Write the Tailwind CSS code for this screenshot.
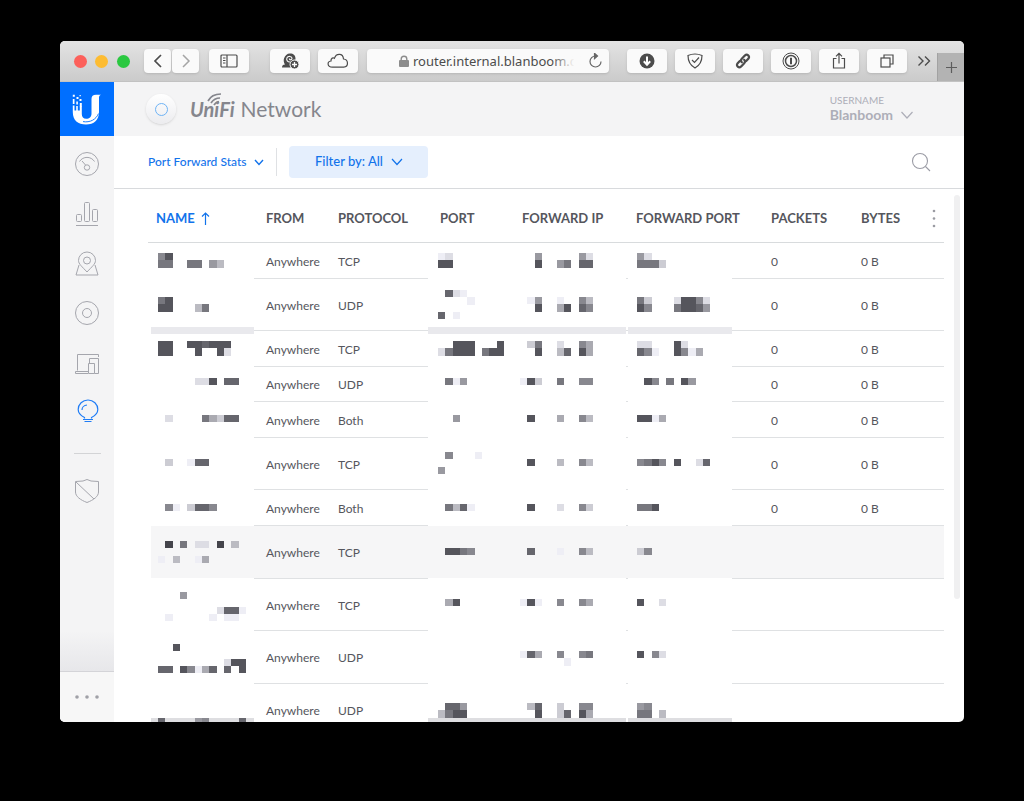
<!DOCTYPE html>
<html lang="en">
<head>
<meta charset="utf-8">
<title>UniFi Network</title>
<script src="https://cdn.jsdelivr.net/npm/@tailwindcss/browser@4"></script>
</head>
<body class="flex h-screen flex-col bg-black px-[60px] pt-[41px] pb-[79px] font-[Lato,sans-serif]">
<div class="flex min-h-0 flex-1 flex-col overflow-hidden rounded-[5px] bg-white">

  <!-- Browser toolbar -->
  <div class="flex h-[41px] shrink-0 items-center border-b border-[#c2c2c2] bg-linear-to-b from-[#e3e3e3] to-[#cbcbcb] text-[#4c4c4c]">
    <div class="ml-3.5 flex gap-2">
      <span class="size-[13px] rounded-full bg-[#fc605b]"></span>
      <span class="size-[13px] rounded-full bg-[#fdbc32]"></span>
      <span class="ml-px size-[13px] rounded-full bg-[#2ac840]"></span>
    </div>
    <div class="ml-3.5 flex gap-px">
      <button aria-label="Back" class="flex h-6 w-[27px] items-center justify-center rounded-sm bg-[#fafafa] shadow-sm"><svg width="10" height="14" fill="none" stroke="currentColor" stroke-width="1.7"><path d="M8 1 2 7l6 6"/></svg></button>
      <button aria-label="Forward" class="flex h-6 w-[27px] items-center justify-center rounded-sm bg-[#fafafa] text-[#a5a5a5] shadow-sm"><svg width="10" height="14" fill="none" stroke="currentColor" stroke-width="1.5"><path d="m2 1 6 6-6 6"/></svg></button>
    </div>
    <button aria-label="Sidebar" class="ml-2.5 flex h-6 w-10 items-center justify-center rounded-sm bg-[#fafafa] shadow-sm"><svg width="18" height="14" fill="none" stroke="currentColor" stroke-width="1.2"><rect x="1" y="1" width="16" height="12" rx="1"/><path d="M7 1v12M3 4h2.500M3 6.500h2.500M3 9h2.500"/></svg></button>
    <button aria-label="Add feed" class="ml-[21px] flex h-6 w-10 items-center justify-center rounded-sm bg-[#fafafa] shadow-sm"><svg width="20" height="18" viewBox="0 0 20 18"><path d="M2 15.500c0-2 1-3 3-3C3.500 10.500 3.500 8 4 6.500 5 3.500 7 1.500 10 1.500c3.500 0 5.500 2 5.500 5 0 2-1 4-3 5l-2 4z" fill="#4c4c4c"/><path d="M10.500 10C7.500 10.500 6 8 7 5.800c1-2 5-1.800 5 .5 0 2-2.800 2-2.600.2" fill="none" stroke="#fafafa" stroke-width="1.100"/><circle cx="14.500" cy="12.500" r="4.500" fill="#4c4c4c" stroke="#fafafa"/><path d="M12 12.500h5M14.500 10v5" stroke="#fafafa" stroke-width="1.300"/></svg></button>
    <button aria-label="Cloud tabs" class="ml-2 flex h-6 w-10 items-center justify-center rounded-sm bg-[#fafafa] shadow-sm"><svg width="22" height="16" viewBox="0 0 22 16" fill="none" stroke="currentColor" stroke-width="1.200"><path d="M5.500 14.200C-.2 14 0 8.500 4 8 3.600 5 6.500 4.300 7.500 5.200 9 .2 16-.2 16.500 6c5 .3 5.500 7.800.2 8.200z"/></svg></button>
    <div class="ml-[9px] mr-[18px] flex h-6 min-w-0 flex-1 items-center rounded-sm bg-[#fafafa] pr-1.5 pl-8 shadow-sm">
      <svg class="shrink-0" width="10" height="13" viewBox="0 0 10 13"><rect y="5" width="10" height="7" rx="1" fill="#8c8c8c"/><path d="M2.200 6V4a2.800 2.800 0 0 1 5.600 0v2" fill="none" stroke="#8c8c8c" stroke-width="1.400"/></svg>
      <div class="relative ml-1 min-w-0 flex-1">
        <input aria-label="Address" value="router.internal.blanboom.com" class="block w-full bg-transparent font-['Noto_Sans',sans-serif] text-[13px] leading-5 text-[#4c4c4c]">
        <div class="absolute inset-y-0 right-0 w-8 bg-linear-to-r from-[#fafafa]/0 to-[#fafafa] to-70%"></div>
      </div>
      <button aria-label="Reload" class="ml-1"><svg width="15" height="16" viewBox="0 0 15 16" fill="none" stroke="#666" stroke-width="1.200"><path d="M13 8.500A5.500 5.500 0 1 1 7.500 3H9"/><path d="m6.500.3 3 2.700-3 2.700z" fill="#666"/></svg></button>
    </div>
    <div class="flex gap-2">
      <button aria-label="Downloads" class="flex h-6 w-10 items-center justify-center rounded-sm bg-[#fafafa] shadow-sm"><svg width="16" height="16"><circle cx="8" cy="8" r="7.500" fill="#4c4c4c"/><path d="M8 3.500v8M4.800 8.300 8 11.700l3.200-3.400" fill="none" stroke="#fff" stroke-width="2"/></svg></button>
      <button aria-label="Ad blocker" class="flex h-6 w-10 items-center justify-center rounded-sm bg-[#fafafa] shadow-sm"><svg width="16" height="16" fill="none" stroke="currentColor" stroke-width="1.200"><path d="M8 1c2.500 0 5 .6 7 1.500 0 6-2.500 10-7 12.500-4.500-2.500-7-6.500-7-12.500C3 1.600 5.500 1 8 1z"/><path d="m5 7 2.500 2.500L12 4.500"/></svg></button>
      <button aria-label="Copy link" class="flex h-6 w-10 items-center justify-center rounded-sm bg-[#fafafa] shadow-sm"><svg width="16" height="16" viewBox="0 0 16 16" fill="none" stroke="currentColor" stroke-width="2.200" stroke-linecap="round"><path d="M6.800 9.200c-1-1-1-2.300 0-3.400l3-3.200c2.400-2.200 5.500.6 3.500 3.200l-2.100 2.300"/><path d="M9.200 6.800c1 1 1 2.300 0 3.400l-3 3.200c-2.400 2.200-5.500-.6-3.500-3.200l2.100-2.300"/></svg></button>
      <button aria-label="1Password" class="flex h-6 w-10 items-center justify-center rounded-sm bg-[#fafafa] shadow-sm"><svg width="18" height="18" fill="none" stroke="currentColor"><circle cx="9" cy="9" r="8"/><circle cx="9" cy="9" r="5.500" stroke-width="1.500"/><path d="M9 5.800v6.400" stroke-width="2"/></svg></button>
      <button aria-label="Share" class="flex h-6 w-10 items-center justify-center rounded-sm bg-[#fafafa] shadow-sm"><svg width="14" height="18" fill="none" stroke="currentColor" stroke-width="1.200"><path d="M4.500 6.500h-3v9.500h11V6.500h-3M7 11.500v-10M4 4.300l3-3 3 3"/></svg></button>
      <button aria-label="Tabs" class="flex h-6 w-10 items-center justify-center rounded-sm bg-[#fafafa] shadow-sm"><svg width="14" height="14" fill="none" stroke="currentColor" stroke-width="1.200"><rect x="1" y="4" width="9" height="9"/><path d="M4 4V1h9v9h-3"/></svg></button>
    </div>
    <button aria-label="More" class="ml-2.5"><svg width="14" height="12" fill="none" stroke="currentColor" stroke-width="1.400"><path d="m1.500 1.500 4.500 4.500-4.500 4.500M8 1.500l4.500 4.500L8 10.500"/></svg></button>
    <button aria-label="New tab" class="ml-1.5 flex h-7 w-[27px] items-center justify-center self-end border-l border-[#a2a2a2] bg-[#b3b3b3]"><svg width="13" height="13" stroke="#5c5c5c" stroke-width="1.200"><path d="M6.500 1v11M1 6.500h11"/></svg></button>
  </div>

  <div class="flex min-h-0 flex-1">
    <!-- Navigation -->
    <nav class="flex w-[54px] shrink-0 flex-col bg-[#f4f4f5] text-[#a5a6ad]">
      <a href="#" aria-label="Home" class="flex h-[54px] items-center justify-center bg-[#006fff]">
        <svg width="30" height="31" viewBox="0 0 30 31" fill="#fff"><path d="M19.500 5c0-3 1.500-4.200 4.500-4.200h5c-1.600.7-2 1.700-2 3.200v14c0 8-5 12.500-13 12.500S.8 26.500.8 18v-6.500h1.700v5h1.700V12h1.600v4.500h2V12h2v8c0 3 1.500 4.800 4.500 4.800s5.200-1.800 5.200-5.300z"/><path d="M.8.800h2v2h-2zM4.500 3h2v2h-2zM7.500 1h1.300v1.300H7.500zM7.500 5h2v2h-2zM.8 5h1.700v5H.8zM4.300 7.500h1.600v3H4.300zM7.800 9h2v3.500h-2z"/><path d="M11 27.600c7 1.200 13-2 15.500-8" fill="none" stroke="#006fff" stroke-width=".9"/></svg>
      </a>
      <div class="flex flex-1 flex-col items-center pt-[15px]">
        <a href="#" aria-label="Dashboard" class="block h-[50px]"><svg width="26" height="26" fill="none" stroke="currentColor"><circle cx="13" cy="13" r="11.500"/><path d="M5.500 10.500c3.500-5.500 11.500-5.500 15 0"/><circle cx="13" cy="16.500" r="2.700"/><path d="m11.500 14-3.500-4"/></svg></a>
        <a href="#" aria-label="Statistics" class="block h-[50px]"><svg width="26" height="26" fill="none" stroke="currentColor"><rect x="2.500" y="13.500" width="5" height="7" rx="1"/><rect x="10.500" y="1.500" width="5" height="19" rx="1"/><rect x="18.500" y="8.500" width="5" height="12" rx="1"/><path d="M2 24.500h22"/></svg></a>
        <a href="#" aria-label="Map" class="block h-[49px]"><svg width="26" height="26" fill="none" stroke="currentColor"><path d="M13 21C8 15.500 4.500 13 4.500 9.500a8.500 8.500 0 0 1 17 0C21.500 13 18 15.500 13 21z"/><circle cx="13" cy="9.500" r="3.500"/><path d="m5 14-3 10h22l-3-10"/></svg></a>
        <a href="#" aria-label="Devices" class="block h-[51px]"><svg width="26" height="26" fill="none" stroke="currentColor"><circle cx="13" cy="13" r="11.500"/><circle cx="13" cy="13" r="4.500"/></svg></a>
        <a href="#" aria-label="Clients" class="block h-[47px]"><svg width="26" height="26" fill="none" stroke="currentColor"><path d="M24.500 6V3.500h-21v16M14 20.500H1.500v2H14M14.500 22.500v-10h6v10zM15.500 12.500v-5h9v15h-4"/></svg></a>
        <a href="#" aria-label="Insights" class="block text-[#1f7cf5]"><svg width="26" height="26" fill="none" stroke="currentColor" stroke-width="1.200"><path d="M10.500 20.500v-1C6.500 17.500 4.200 15 4.200 11.500a9.800 9.500 0 0 1 19.600 0c0 3.500-2.300 6-6.300 8v1M9 21.500h10M10.500 23.500h7M8 12c0-2.500 2-4.800 5-5"/></svg></a>
        <div class="mt-[29px] h-px w-[27px] bg-[#d3d4d6]"></div>
        <a href="#" aria-label="Security" class="mt-6 block"><svg width="26" height="26" fill="none" stroke="currentColor"><path d="M13 1.500 17 3l7.500.5V14c0 4.500-5 8-11.500 10.500C6.500 22 1.500 18.500 1.500 14V3.500L9 3zM2 4l18 17"/></svg></a>
      </div>
      <div class="h-10 bg-linear-to-b from-[#f4f4f5] to-[#e7e7ea]"></div>
      <button aria-label="More options" class="flex h-[51px] items-center justify-center border-t border-[#d4d4d8] bg-[#f7f7f7]"><svg width="26" height="4" fill="#a0a1a7"><circle cx="3" cy="2" r="1.800"/><circle cx="13" cy="2" r="1.800"/><circle cx="23" cy="2" r="1.800"/></svg></button>
    </nav>

    <main class="flex min-w-0 flex-1 flex-col">
      <header class="flex h-[54px] shrink-0 items-center bg-[#f4f4f5] pr-[51px] pl-8">
        <span class="flex size-[30px] items-center justify-center rounded-full bg-linear-to-b from-white to-[#ececef] shadow-sm"><span class="size-[13px] rounded-full border-[1px] border-[#6fb3f5]"></span></span>
        <h1 class="ml-[14px] flex items-center gap-1.5 text-[21px] leading-[54px] text-[#85868d]">
          <span class="relative text-[20px] font-bold italic">UniFi
            <svg class="absolute top-2.5 left-4" width="18" height="15" viewBox="0 0 18 15" fill="none" stroke="#85868d" stroke-width="1.700"><path d="M2 9C4 5 9 2 15 2M5 11c2-3 5-5 9-5M8 13c1-2 3-3 5-3.500"/></svg>
          </span>
          <span>Network</span>
        </h1>
        <button class="ml-auto text-left text-[#adaeb8]">
          <span class="block text-[10px] leading-3">USERNAME</span>
          <span class="flex items-center gap-2 text-[14px] leading-[18px] font-bold">Blanboom <svg width="12" height="8" fill="none" stroke="currentColor" stroke-width="1.200"><path d="m.5 1 5.500 6 5.500-6"/></svg></span>
        </button>
      </header>

      <div class="flex h-[53px] shrink-0 items-center border-b border-[#d8dadd] pr-[33px] pl-[34px] font-medium text-[#1273eb]">
        <button class="flex items-center gap-2 text-xs">Port Forward Stats <svg width="10" height="7" fill="none" stroke="currentColor" stroke-width="1.400"><path d="m1 1 4 4.500L9 1"/></svg></button>
        <div class="mx-3 h-7 w-px bg-[#dfe1e4]"></div>
        <button class="flex h-8 w-[139px] items-center justify-center gap-2 rounded bg-[#e5effd] text-[13px]">Filter by: All <svg width="12" height="8" fill="none" stroke="currentColor" stroke-width="1.200"><path d="m1 1 5 5.500L11 1"/></svg></button>
        <button aria-label="Search" class="ml-auto"><svg width="20" height="20" fill="none" stroke="#9b9ca5" stroke-width="1.100"><circle cx="9" cy="9" r="7.500"/><path d="m14.500 14.500 4.500 4.500"/></svg></button>
      </div>

      <div class="flex min-h-0 flex-1 overflow-hidden pr-1 pl-[34px]">
        <div class="min-w-0 flex-1">
          <table class="w-full table-fixed border-separate border-spacing-0 text-left text-xs text-[#55565d]">
            <colgroup><col class="w-[106px]"><col class="w-[72px]"><col class="w-[102px]"><col class="w-[82px]"><col class="w-[114px]"><col class="w-[135px]"><col class="w-[90px]"><col></colgroup>
            <thead class="text-[13px]">
              <tr class="h-[54px] whitespace-nowrap [&>th]:border-b [&>th]:border-[#d8dbdd] [&>th]:px-3 [&>th]:pt-1.5">
                <th class="text-[#1273eb]"><button class="-ml-1 flex items-center gap-1.5 font-bold">NAME <svg width="9" height="13" fill="none" stroke="currentColor" stroke-width="1.200"><path d="M4.500 13V1M1 4.500 4.500 1 8 4.500"/></svg></button></th>
                <th>FROM</th><th>PROTOCOL</th><th>PORT</th><th>FORWARD IP</th><th>FORWARD PORT</th><th>PACKETS</th>
                <th><div class="-mr-1 flex items-center justify-between">BYTES <button aria-label="Columns"><svg width="4" height="20" fill="#9a9ba2"><circle cx="2" cy="2" r="1.300"/><circle cx="2" cy="9.500" r="1.300"/><circle cx="2" cy="17" r="1.300"/></svg></button></div></th>
              </tr>
            </thead>
            <tbody id="rows"></tbody>
          </table>
        </div>
        <div class="mt-1.5 ml-2.5 h-[404px] w-1.5 rounded-full bg-[#f0f0f1]"></div>
      </div>
    </main>
  </div>
</div>

<script>
// Row fields: height class, protocol, has counters, then the four redacted cells.
// A redacted cell is [first mosaic line's offset, lines]; each hex digit is one tile's grey level.
const rows = [
  ['h-9', 'TCP', 1, [10, '85/77..77.9b'], [10, 'ed/55'], [10, '..9.....9d/..5..97.66'], [10, '9d/777c']],
  ['h-[52px]', 'UDP', 1, [18, '75/55...b7'], [11, '.6de/....e//6.e'], [18, '.e9..e..8b/..5..a5.68'], [18, '7c...d558d/58...75569']],
  ['h-9', 'TCP', 1, [10, '55..556555/55...5..5d'], [10, '..555...5/d7555.755'], [10, '.c7..d..8a/..5..b6.5a'], [10, 'dd...5d/68e..58ea']],
  ['h-[35px]', 'UDP', 1, [11, '.....dd5.66'], [11, '.7e9'], [11, 'e5c..7..88'], [11, '.58.7.59']],
  ['h-9', 'Both', 1, [13, '.d....7ac66'], [13, '..9'], [13, '.5...a..8b'], [13, '55ea']],
  ['h-[52px]', 'TCP', 1, [21, '.c..e66'], [14, '.8...e//9'], [21, '.5...b..8b'], [21, '8758.5..d6']],
  ['h-9', 'Both', 1, [14, '.8e.c668'], [14, '.7b6e'], [14, '.5...d..8c'], [14, '775']],
  ['h-[53px]', 'TCP', 0, [15, '.4.7.dd.4.b//e.b..ea'], [22, '.5578'], [22, '.6...e..8b'], [22, 'c8']],
  ['h-[52px]', 'TCP', 0, [13, '...9//........d66e/.e.....e.ee'], [20, '.a5'], [20, 'e5e..8..8a'], [20, '5..d']],
  ['h-[53px]', 'UDP', 0, [13, '..5//.........d55/66.58ea6.6.5'], [20, ''], [20, 'e6a..8..87/......e'], [20, '5.8d']],
  ['h-[53px]', 'UDP', 0, [34, '6....98....6'], [19, '.669/b755'], [19, '.b6..c..88/..5..c6.5a'], [19, '98/77.b']]
];
// Per redacted column: x of the first tile, x and width of the covered stretch
const cols = [[10, 0, 106], [10, 0, 82], [10, 0, 116], [13, 4, 104]];
const tile = 22 / 3;

function mosaic(cell, c, r) {
  const [x0, bx, bw] = cols[c];
  const y0 = cell[0];
  const h = [36, 52, 36, 35, 36, 52, 36, 53, 52, 53, 53][r];
  let s = `<rect x="${bx}" y="${h - 1}" width="${bw}" height="1" fill="#fff"/>`;
  if (r === 7 && c === 0) s += `<rect width="3" height="${h}" fill="#fff"/>`;
  if (r === 1 || r === 10) {
    const x = c === 0 ? 3 : bx;
    s += `<rect x="${x}" y="${r === 1 ? 48 : 34}" width="${bw - (c === 0 ? 3 : 0)}" height="${r === 1 ? 7 : 6}" fill="${r === 1 ? '#e9e9ed' : '#dedee1'}"/>`;
  }
  cell[1].split('/').forEach((line, j) => [...line].forEach((d, i) => {
    if (d === '.') return;
    const v = parseInt(d, 16) * 17;
    const x = Math.round(x0 + i * tile), y = Math.round(y0 + j * tile);
    const w = Math.round(x0 + (i + 1) * tile) - x, t = Math.round(y0 + (j + 1) * tile) - y;
    s += `<rect x="${x}" y="${y}" width="${w}" height="${t}" fill="rgb(${v},${v},${Math.min(255, v + 7)})"/>`;
  }));
  return `<td class="relative"><svg class="absolute inset-0 z-10 size-full overflow-visible" shape-rendering="crispEdges" aria-hidden="true">${s}</svg></td>`;
}

document.getElementById('rows').innerHTML = rows.map((row, r) => {
  const [h, proto, counted, ...m] = row;
  const bg = r === 7 ? 'bg-[#f6f6f7]' : 'bg-white';
  return `<tr class="${h} ${bg} [&>td]:border-b [&>td]:border-[#dfe1e3] [&>td]:px-3 [&>td]:pt-0.5">
    ${mosaic(m[0], 0, r)}<td>Anywhere</td><td>${proto}</td>
    ${mosaic(m[1], 1, r)}${mosaic(m[2], 2, r)}${mosaic(m[3], 3, r)}
    <td>${counted ? '0' : ''}</td><td>${counted ? '0 B' : ''}</td></tr>`;
}).join('');
</script>
</body>
</html>
